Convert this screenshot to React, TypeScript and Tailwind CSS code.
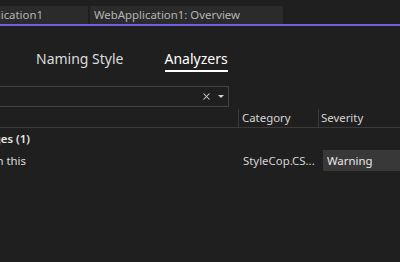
import { X } from "lucide-react";

function DocTab({ label, clip, width }: { label: string; clip?: number; width: string }) {
    return (
        <div className={`flex h-[18px] items-center overflow-hidden bg-[#2b2b2b] ${width}`}>
            {clip ? (
                <div className="flex h-full items-center justify-end whitespace-nowrap" style={{ width: clip }}>
                    {label}
                </div>
            ) : (
                <div className="whitespace-nowrap pl-[4px]">{label}</div>
            )}
        </div>
    );
}

export default function App() {
    return (
        <div
            className="h-[262px] w-[400px] overflow-hidden bg-[#1f1f1f] text-[11.4px] text-[#d6d6d6]"
            style={{ fontFamily: '"Segoe UI", "Noto Sans", sans-serif' }}
        >
            {/* document tabs */}
            <div className="flex gap-[2px] pt-[6px] text-[#b4b4b4]">
                <DocTab label="WebApplication1" clip={43} width="w-[88px]" />
                <DocTab label="WebApplication1: Overview" width="w-[193px]" />
            </div>
            <div className="h-[2px] bg-[#705fe0]" />

            {/* page tabs */}
            <div className="flex gap-[41px] pl-[36px] pt-[23px] text-[14px] leading-[20px]">
                <div className="text-[#dcdcdc]">Naming Style</div>
                <div className="flex flex-col text-white">
                    <span>Analyzers</span>
                    <span className="mt-[1px] h-[2px] bg-white" />
                </div>
            </div>

            {/* search */}
            <div className="ml-[-1px] mt-[14px] flex h-[21px] w-[230px] items-center justify-end gap-[6px] border border-[#434343] pr-[4px]">
                <X className="h-[11px] w-[11px] text-[#d0d0d0]" strokeWidth={2.2} />
                <span className="h-0 w-0 border-x-[3px] border-t-[3px] border-x-transparent border-t-[#d0d0d0]" />
            </div>

            {/* table header */}
            <div className="mt-[2px] flex h-[19px] items-center border-b border-[#3a3a3a] text-[#d6d6d6]">
                <div className="h-full w-[239px] border-r border-[#3a3a3a]" />
                <div className="flex h-full w-[80px] items-center border-r border-[#3a3a3a] pl-[3px]">Category</div>
                <div className="pl-[2px]">Severity</div>
            </div>

            {/* group row */}
            <div className="flex h-[21px] items-center">
                <div className="flex w-[30px] justify-end whitespace-nowrap font-semibold text-[#e6e6e6]">
                    Messages&nbsp;(1)
                </div>
            </div>

            {/* rule row */}
            <div className="flex h-[23px] items-center">
                <div className="flex w-[26px] justify-end whitespace-nowrap text-[#dcdcdc]">
                    Suppress warning when this
                </div>
                <div className="ml-[217px] w-[80px] whitespace-nowrap pr-[3px] text-[#d6d6d6]">StyleCop.CS...</div>
                <div className="flex h-[21px] flex-1 items-center bg-[#383838] pl-[4px] text-[#e8e8e8]">Warning</div>
            </div>
        </div>
    );
}
